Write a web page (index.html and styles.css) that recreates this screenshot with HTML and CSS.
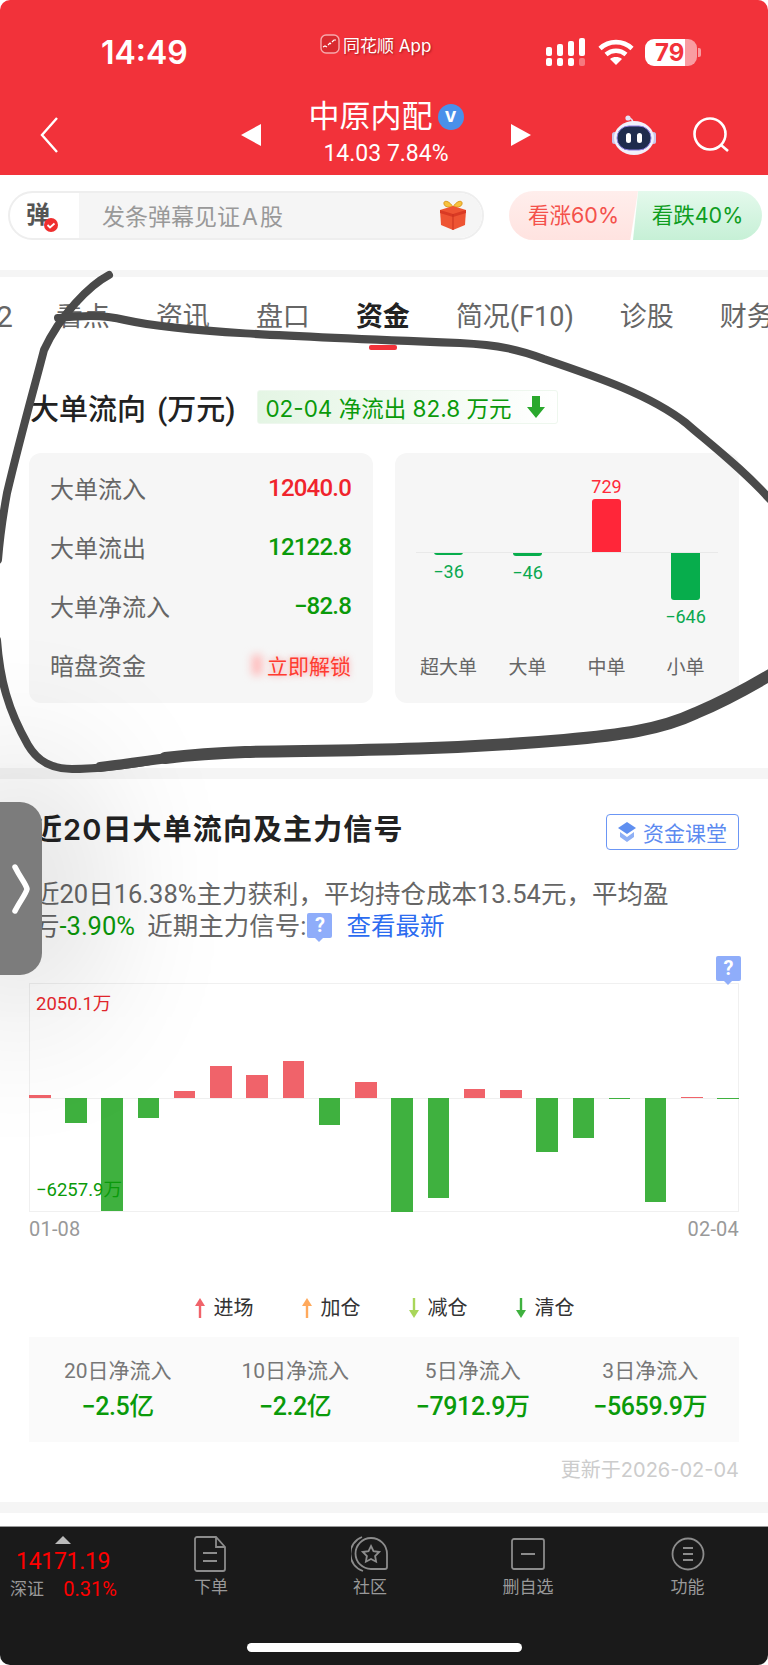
FILE: index.html
```html
<!DOCTYPE html>
<html lang="zh-CN">
<head>
<meta charset="utf-8">
<title>中原内配 资金</title>
<link rel="stylesheet" href="styles.css">
</head>
<body>
<div class="page">

  <header class="header">
    <div class="status">
      <div class="time">14:49</div>
      <div class="app">
        <svg class="app-logo" viewBox="0 0 20 20"><rect x="1" y="1" width="18" height="18" rx="5" fill="#d92a30" stroke="#f7a9ac" stroke-width="1.4"/><path d="M3 13l2-1 2 1M8 11l2-2 1 1M12 8l2-2 2 0" fill="none" stroke="#fff" stroke-width="1.2"/></svg>
        <span>同花顺 App</span>
      </div>
      <div class="status-icons">
        <svg class="signal" width="40" height="28" viewBox="0 0 40 28" fill="#fff">
          <rect x="0" y="9" width="6" height="9" rx="2"/><rect x="11" y="6" width="6" height="12" rx="2"/><rect x="22" y="3" width="6" height="15" rx="2"/><rect x="33" y="0" width="6" height="18" rx="2"/>
          <rect x="0" y="20" width="6" height="8" rx="2"/><rect x="11" y="20" width="6" height="8" rx="2"/><rect x="22" y="20" width="6" height="8" rx="2"/><rect x="33" y="20" width="6" height="8" rx="2" opacity=".35"/>
        </svg>
        <svg class="wifi" width="36" height="26" viewBox="0 0 36 26" fill="none" stroke="#fff" stroke-width="4.6">
          <path d="M2 9.5C11 1 25 1 34 9.5"/><path d="M8 15.5c6-5 14-5 20 0"/><path d="M18 26l-6-6c3.400-2.600 8.600-2.600 12 0z" fill="#fff" stroke="none"/>
        </svg>
        <div class="battery">79</div>
        <div class="battery-nub"></div>
      </div>
    </div>
    <div class="nav">
      <svg class="back" width="18" height="36" viewBox="0 0 18 36" fill="none" stroke="#fff" stroke-width="2.4"><path d="M17 1L2 18l15 17"/></svg>
      <div class="tri tri-left"></div>
      <div class="stock">
        <div class="stock-name">中原内配<span class="v-badge">v</span></div>
        <div class="stock-price">14.03 7.84%</div>
      </div>
      <div class="tri tri-right"></div>
      <svg class="robot" width="44" height="40" viewBox="0 0 44 40">
        <circle cx="16" cy="3" r="2.600" fill="#e4e4f6"/>
        <path d="M16 3c3 0 5 2 5 6" fill="none" stroke="#e4e4f6" stroke-width="1.600"/>
        <rect x="0" y="17" width="5" height="12" rx="2.500" fill="#c9c6ea"/>
        <rect x="39" y="17" width="5" height="12" rx="2.500" fill="#c9c6ea"/>
        <ellipse cx="22" cy="23" rx="20" ry="17" fill="#f1f1fb"/>
        <rect x="5" y="11" width="34" height="24" rx="12" fill="#1f2c4d" stroke="#8d7fe0" stroke-width="1"/>
        <rect x="14" y="18" width="5" height="10" rx="2.500" fill="#fff"/>
        <rect x="25" y="18" width="5" height="10" rx="2.500" fill="#fff"/>
      </svg>
      <svg class="search" width="36" height="36" viewBox="0 0 36 36" fill="none" stroke="#fff" stroke-width="2.600"><circle cx="17" cy="17" r="15.500"/><path d="M28 28l7 6"/></svg>
    </div>
  </header>

  <div class="barrage">
    <div class="barrage-input">
      <div class="barrage-tag">
        <span class="barrage-char">弹</span>
        <svg class="barrage-check" width="14" height="14" viewBox="0 0 14 14"><circle cx="7" cy="7" r="7" fill="#ef2f2f"/><path d="M3.500 7l2.500 2.500 4.500-4" fill="none" stroke="#fff" stroke-width="1.800"/></svg>
      </div>
      <div class="barrage-text">
        <span>发条弹幕见证<span class="barrage-a">A</span>股</span>
        <svg width="32" height="31" viewBox="0 0 32 31">
          <path d="M16 8C12 1 6 1 7 5c.5 3 5 3.500 9 3zM16 8c4-7 10-7 9-3-.5 3-5 3.500-9 3z" fill="#f7c23c" stroke="#dd9a1f"/>
          <path d="M3 11l13-4 13 4-1 15-12 5-12-5z" fill="#ee5433"/>
          <path d="M3 11l13 4 13-4v3l-13 4-13-4z" fill="#d93a24"/>
          <path d="M16 15v16" stroke="#c9301e" stroke-width="1"/>
        </svg>
      </div>
    </div>
    <div class="vote vote-up">看涨60%</div>
    <div class="vote vote-down">看跌40%</div>
  </div>

  <div class="divider divider-thin"></div>

  <nav class="tabs">
    <span class="tab tab-cut">2</span>
    <span class="tab">看点</span>
    <span class="tab">资讯</span>
    <span class="tab">盘口</span>
    <span class="tab tab-active">资金</span>
    <span class="tab">简况(F10)</span>
    <span class="tab">诊股</span>
    <span class="tab">财务</span>
  </nav>

  <section class="flow">
    <div class="flow-head">
      <h2 class="flow-title">大单流向 (万元)</h2>
      <div class="chip">
        <span>02-04 净流出 82.8 万元</span>
        <svg width="20" height="24" viewBox="0 0 20 24"><path d="M6 1h8v11h5L10 23 1 12h5z" fill="#29a82c"/></svg>
      </div>
    </div>
    <div class="flow-cards">
      <div class="card list-card">
        <div class="row"><span>大单流入</span><b class="red">12040.0</b></div>
        <div class="row"><span>大单流出</span><b class="green">12122.8</b></div>
        <div class="row"><span>大单净流入</span><b class="green">−82.8</b></div>
        <div class="row"><span>暗盘资金</span><em class="unlock">立即解锁</em></div>
      </div>
      <div class="card size-card">
        <div class="size-line"></div>
        <div class="size-col">
          <div class="size-up"></div>
          <div class="size-down"><div class="size-bar bar-green" style="height:3px"></div><span class="size-val green2">−36</span></div>
          <div class="size-name">超大单</div>
        </div>
        <div class="size-col">
          <div class="size-up"></div>
          <div class="size-down"><div class="size-bar bar-green" style="height:4px"></div><span class="size-val green2">−46</span></div>
          <div class="size-name">大单</div>
        </div>
        <div class="size-col">
          <div class="size-up"><span class="size-val red2">729</span><div class="size-bar bar-red" style="height:53px"></div></div>
          <div class="size-down"></div>
          <div class="size-name">中单</div>
        </div>
        <div class="size-col">
          <div class="size-up"></div>
          <div class="size-down"><div class="size-bar bar-green" style="height:48px"></div><span class="size-val green2">−646</span></div>
          <div class="size-name">小单</div>
        </div>
      </div>
    </div>
  </section>

  <div class="divider"></div>

  <section class="signal-sec">
    <div class="signal-head">
      <h2 class="signal-title">近20日大单流向及主力信号</h2>
      <div class="class-btn">
        <svg width="20" height="22" viewBox="0 0 20 22"><path d="M10 1l9 6-9 6-9-6z" fill="#5f8ff0"/><path d="M3 11l7 5 7-5v5l-7 5-7-5z" fill="#8fb0f5"/></svg>
        <span>资金课堂</span>
      </div>
    </div>
    <p class="signal-text">近20日16.38%主力获利，平均持仓成本13.54元，平均盈<br>亏<span class="green signal-pct">-3.90%</span> 近期主力信号:<span class="qmark">?</span><a class="more">查看最新</a></p>

    <div class="chart">
      <span class="qmark qmark-chart">?</span>
      <div class="chart-zero"></div>
      <span class="chart-max">2050.1万</span>
      <span class="chart-min">−6257.9万</span>
      <div class="bars">
        <div class="bar-col"><div class="bar-up"><i style="height:3px"></i></div><div class="bar-down"></div></div>
        <div class="bar-col"><div class="bar-up"></div><div class="bar-down"><i style="height:25px"></i></div></div>
        <div class="bar-col"><div class="bar-up"></div><div class="bar-down"><i style="height:113px"></i></div></div>
        <div class="bar-col"><div class="bar-up"></div><div class="bar-down"><i style="height:20px"></i></div></div>
        <div class="bar-col"><div class="bar-up"><i style="height:7px"></i></div><div class="bar-down"></div></div>
        <div class="bar-col"><div class="bar-up"><i style="height:32px"></i></div><div class="bar-down"></div></div>
        <div class="bar-col"><div class="bar-up"><i style="height:23px"></i></div><div class="bar-down"></div></div>
        <div class="bar-col"><div class="bar-up"><i style="height:37px"></i></div><div class="bar-down"></div></div>
        <div class="bar-col"><div class="bar-up"></div><div class="bar-down"><i style="height:27px"></i></div></div>
        <div class="bar-col"><div class="bar-up"><i style="height:16px"></i></div><div class="bar-down"></div></div>
        <div class="bar-col"><div class="bar-up"></div><div class="bar-down"><i style="height:114px"></i></div></div>
        <div class="bar-col"><div class="bar-up"></div><div class="bar-down"><i style="height:100px"></i></div></div>
        <div class="bar-col"><div class="bar-up"><i style="height:9px"></i></div><div class="bar-down"></div></div>
        <div class="bar-col"><div class="bar-up"><i style="height:8px"></i></div><div class="bar-down"></div></div>
        <div class="bar-col"><div class="bar-up"></div><div class="bar-down"><i style="height:54px"></i></div></div>
        <div class="bar-col"><div class="bar-up"></div><div class="bar-down"><i style="height:40px"></i></div></div>
        <div class="bar-col"><div class="bar-up"></div><div class="bar-down"><i style="height:1px"></i></div></div>
        <div class="bar-col"><div class="bar-up"></div><div class="bar-down"><i style="height:104px"></i></div></div>
        <div class="bar-col"><div class="bar-up"><i style="height:1px"></i></div><div class="bar-down"></div></div>
        <div class="bar-col"><div class="bar-up"></div><div class="bar-down"><i style="height:1px"></i></div></div>
      </div>
    </div>
    <div class="dates"><span>01-08</span><span>02-04</span></div>

    <div class="legend">
      <div class="legend-item"><svg class="arrow a-red" viewBox="0 0 12 20"><path d="M6 0l5 8H7.200v12H4.800V8H1z"/></svg>进场</div>
      <div class="legend-item"><svg class="arrow a-orange" viewBox="0 0 12 20"><path d="M6 0l5 8H7.200v12H4.800V8H1z"/></svg>加仓</div>
      <div class="legend-item"><svg class="arrow a-lime" viewBox="0 0 12 20"><path d="M6 20l5-8H7.200V0H4.800v12H1z"/></svg>减仓</div>
      <div class="legend-item"><svg class="arrow a-green" viewBox="0 0 12 20"><path d="M6 20l5-8H7.200V0H4.800v12H1z"/></svg>清仓</div>
    </div>

    <div class="stats">
      <div class="stat"><div class="stat-name">20日净流入</div><div class="stat-val">−2.5亿</div></div>
      <div class="stat"><div class="stat-name">10日净流入</div><div class="stat-val">−2.2亿</div></div>
      <div class="stat"><div class="stat-name">5日净流入</div><div class="stat-val">−7912.9万</div></div>
      <div class="stat"><div class="stat-name">3日净流入</div><div class="stat-val">−5659.9万</div></div>
    </div>
    <div class="updated">更新于2026-02-04</div>
  </section>

  <div class="divider"></div>
  <div class="gap"></div>

  <footer class="bottom">
    <div class="bottom-row">
      <div class="index">
        <div class="index-tri"></div>
        <div class="index-val">14171.19</div>
        <div class="index-sub"><span>深证</span><b>0.31%</b></div>
      </div>
      <div class="action">
        <svg width="34" height="36" viewBox="0 0 34 36" fill="none" stroke="#8c8c8c" stroke-width="1.800"><path d="M3 1h19l9 10v22a2 2 0 0 1-2 2H3a2 2 0 0 1-2-2V3a2 2 0 0 1 2-2zM22 1v10h9M9 17h14M9 25h14"/></svg>
        <span>下单</span>
      </div>
      <div class="action">
        <svg width="38" height="36" viewBox="0 0 38 36" fill="none" stroke="#8c8c8c" stroke-width="1.800"><path d="M20 2A16 16 0 0 1 36 18v13a2 2 0 0 1-2 2H20A15.500 15.500 0 0 1 20 2z"/><path d="M11 1A18 18 0 0 0 12 35"/><path d="M20 10l2.500 5.200 5.700.8-4.100 4 1 5.700-5.100-2.700-5.100 2.700 1-5.700-4.100-4 5.700-.8z"/></svg>
        <span>社区</span>
      </div>
      <div class="action">
        <svg width="36" height="34" viewBox="0 0 36 34" fill="none" stroke="#8c8c8c" stroke-width="1.800"><rect x="2" y="2" width="32" height="30" rx="2"/><path d="M11 17h14"/></svg>
        <span>删自选</span>
      </div>
      <div class="action">
        <svg width="34" height="34" viewBox="0 0 34 34" fill="none" stroke="#8c8c8c" stroke-width="1.800"><circle cx="17" cy="17" r="15.500"/><path d="M12 11h10M12 17h10M12 23h10"/></svg>
        <span>功能</span>
      </div>
    </div>
    <div class="home"></div>
  </footer>

  <!-- side handle -->
  <div class="handle">
    <svg width="18" height="50" viewBox="0 0 18 50" fill="none" stroke="#fff" stroke-width="5.500" stroke-linecap="round"><path d="M3 3c6 12 11 17 12 22-1 5-7 12-12 22"/></svg>
  </div>

  <!-- pen marks drawn over the screenshot -->
  <svg class="pen" width="768" height="1665" viewBox="0 0 768 1665" fill="none" stroke="#4a4a4a" stroke-linecap="round">
    <path stroke-width="8" d="M109 275C90 285 60 315 44 350 35 385 22 430 7 493 3 515 0 535-2 560"/>
    <path stroke-width="8" d="M-3 640C0 680 8 710 28 745 38 762 52 769 72 769 96 769 120 766 150 761"/>
    <path stroke-width="10" d="M100 767C125 764 150 760 185 756"/>
    <path stroke-width="12" d="M165 758C190 755 215 753 245 752 320 750 420 752 564 740 620 735 660 730 696 713 720 703 745 690 775 672"/>
    <path stroke-width="8" d="M58 318C80 316 100 314 125 320 180 332 280 336 460 343 500 345 520 350 544 359 600 378 650 395 686 423 705 440 745 470 775 505"/>
  </svg>
</div>
</body>
</html>
```

FILE: styles.css
```css
* { box-sizing: border-box; }
html, body { margin: 0; padding: 0; background: #fff; }
body {
  font-family: Roboto, "Noto Sans CJK SC", sans-serif;
  color: #666;
}
.page {
  position: relative;
  width: 768px;
  height: 1665px;
  overflow: hidden;
  background: #fff;
  border-radius: 10px;
}
h2, p { margin: 0; }

/* header */
.header { height: 175px; background: #f2323a; color: #fff; }
.status {
  display: grid;
  grid-template-columns: 320px 226px 1fr;
  align-items: center;
  height: 100px;
  padding-top: 4px;
}
.time {
  padding-left: 101px;
  font-family: Inter, sans-serif;
  font-size: 32px;
  font-weight: 600;
}
.app {
  display: flex;
  align-items: center;
  gap: 3px;
  margin-top: -16px;
  font-family: Inter, "Noto Sans CJK SC", sans-serif;
  font-size: 17px;
  text-shadow: 1px 1px 2px rgba(90, 0, 0, .5);
}
.app-logo { width: 20px; height: 20px; }
.status-icons { display: flex; align-items: center; }
.wifi { margin-left: 12px; }
.battery {
  width: 52px;
  height: 27px;
  margin-left: 11px;
  border-radius: 9px;
  background: linear-gradient(90deg, #fff 77%, #f99ca1 77%);
  color: #f2323a;
  font-family: Inter, sans-serif;
  font-size: 24px;
  font-weight: 700;
  line-height: 27px;
  padding-left: 10px;
}
.battery-nub { width: 3px; height: 9px; margin-left: 1px; border-radius: 0 2px 2px 0; background: #f99ca1; }
.nav { display: flex; align-items: center; height: 70px; padding-left: 40px; }
.tri { width: 0; height: 0; border-top: 11px solid transparent; border-bottom: 11px solid transparent; }
.tri-left { margin-left: 183px; border-right: 20px solid #fff; }
.tri-right { border-left: 20px solid #fff; }
.stock { width: 250px; margin-top: -5px; text-align: center; }
.stock-name { display: flex; justify-content: center; align-items: center; font-size: 31px; line-height: 36px; }
.v-badge {
  width: 26px;
  height: 26px;
  margin-left: 5px;
  border-radius: 50%;
  background: #4a90ea;
  font-family: "Liberation Sans", sans-serif;
  font-size: 20px;
  font-weight: 700;
  line-height: 23px;
}
.stock-price { margin-top: 7px; font-size: 23px; line-height: 24px; }
.robot { margin-left: 81px; }
.search { margin-left: 37px; }

/* barrage */
.barrage { display: flex; height: 95px; padding: 16px 0 0 8px; }
.barrage-input {
  display: flex;
  width: 476px;
  height: 49px;
  border: 2px solid #eee;
  border-radius: 25px;
  overflow: hidden;
}
.barrage-tag { position: relative; width: 69px; padding-left: 16px; }
.barrage-char { font-size: 24px; font-weight: 700; line-height: 44px; color: #555; }
.barrage-check { position: absolute; left: 34px; top: 25px; }
.barrage-text {
  flex: 1;
  display: flex;
  justify-content: space-between;
  align-items: center;
  padding: 0 13px 2px 23px;
  background: #f5f5f5;
  color: #999;
  font-family: Inter, "Noto Sans CJK SC", sans-serif;
  font-size: 23px;
}
.barrage-a { margin: 0 2px; }
.vote {
  width: 129px;
  height: 49px;
  font-family: Inter, "Noto Sans CJK SC", sans-serif;
  font-size: 21.500px;
  line-height: 49px;
  text-align: center;
}
.vote-up {
  margin-left: 25px;
  border-radius: 25px 0 0 25px;
  background: linear-gradient(180deg, #ffeeec, #ffe3e0);
  color: #f4514b;
  clip-path: polygon(0 0, 100% 0, 94% 100%, 0 100%);
}
.vote-down {
  margin-left: -5px;
  border-radius: 0 25px 25px 0;
  background: linear-gradient(180deg, #e4f9ec, #c6f0d6);
  color: #0f9d1f;
  clip-path: polygon(4% 0, 100% 0, 100% 100%, 0 100%);
}

.divider { height: 11px; background: #f5f5f5; }
.divider-thin { height: 7px; }
.gap { height: 13px; }

/* tabs */
.tabs { display: flex; gap: 46px; height: 73px; padding: 20px 0 0 57px; white-space: nowrap; font-size: 27px; line-height: 40px; }
.tab { position: relative; }
.tab-cut { margin-left: -61px; margin-right: -3px; font-size: 30px; }
.tab-active { color: #222; font-weight: 700; }
.tab-active::after {
  content: "";
  position: absolute;
  left: 13px;
  bottom: 0;
  width: 28px;
  height: 5px;
  border-radius: 2px;
  background: #f2323a;
}

/* flow section */
.flow { padding: 40px 29px 65px; }
.flow-head { display: flex; align-items: center; height: 34px; }
.flow-title { margin-left: 1px; font-size: 29px; font-weight: 500; word-spacing: 4px; color: #222; }
.chip {
  display: flex;
  align-items: center;
  gap: 15px;
  height: 34px;
  margin-left: 22px;
  padding: 0 11px 0 7px;
  border: 1px solid #eef7ee;
  border-radius: 3px;
  background: linear-gradient(90deg, #e4f5e4, #fff);
  color: #0a9a0a;
  font-family: Inter, "Noto Sans CJK SC", sans-serif;
  font-size: 22.500px;
}
.flow-cards { display: grid; grid-template-columns: 344px 344px; gap: 22px; margin-top: 29px; }
.card { height: 250px; border-radius: 12px; background: #f6f6f6; }
.list-card { padding: 5px 22px 5px 21px; }
.row { display: flex; justify-content: space-between; align-items: center; height: 59px; font-size: 24px; }
.row b { font-size: 24px; font-weight: 500; letter-spacing: -.8px; }
.red { color: #f0242c; }
.green { color: #0a9a0a; }
.unlock { position: relative; color: #ff3b30; font-size: 21px; font-style: normal; text-shadow: 0 0 6px rgba(255, 90, 90, .6); }
.unlock::before {
  content: "";
  position: absolute;
  left: -15px;
  top: 5px;
  width: 10px;
  height: 20px;
  background: #ffb9b9;
  filter: blur(4px);
}
.size-card { position: relative; display: grid; grid-template-columns: repeat(4, 79px); padding-left: 14px; }
.size-line { position: absolute; left: 21px; top: 99px; width: 302px; height: 1px; background: #e9e9e9; }
.size-col { display: flex; flex-direction: column; align-items: center; }
.size-up { display: flex; flex-direction: column; justify-content: flex-end; align-items: center; height: 99px; }
.size-down { display: flex; flex-direction: column; align-items: center; height: 104px; }
.size-bar { width: 29px; }
.bar-red { border-radius: 3px 3px 0 0; background: #ff2639; }
.bar-green { border-radius: 0 0 3px 3px; background: #07ad4c; }
.size-val { font-size: 18px; line-height: 24px; }
.size-down .size-val { margin-top: 5px; }
.red2 { color: #ff2a3a; }
.green2 { color: #0aa84f; }
.size-name { font-size: 19px; line-height: 24px; }

/* signal section */
.signal-sec { padding: 35px 29px 20px; }
.signal-head { display: flex; justify-content: space-between; align-items: flex-start; height: 36px; }
.signal-title {
  margin: 1px 0 0 4px;
  font-family: Inter, "Noto Sans CJK SC", sans-serif;
  font-size: 29px;
  font-weight: 600;
  letter-spacing: 1.100px;
  line-height: 30px;
  color: #222;
}
.class-btn {
  display: flex;
  align-items: center;
  gap: 6px;
  width: 133px;
  height: 36px;
  padding-left: 10px;
  border: 1.500px solid #6b96f5;
  border-radius: 4px;
  color: #5c8af0;
  font-size: 21px;
}
.signal-text {
  height: 64px;
  margin: 28px 0 0 5px;
  font-size: 25.500px;
  line-height: 32px;
  white-space: nowrap;
}
.signal-pct { margin-right: 6px; }
.qmark {
  display: inline-block;
  position: relative;
  width: 25px;
  height: 25px;
  margin: 0 14px 0 1px;
  border-radius: 2px;
  background: #8fadfa;
  color: #fff;
  font-size: 20px;
  font-weight: 700;
  line-height: 25px;
  text-align: center;
  vertical-align: 3px;
}
.qmark::after {
  content: "";
  position: absolute;
  left: 8px;
  bottom: -4px;
  border-left: 4px solid transparent;
  border-right: 4px solid transparent;
  border-top: 4px solid #8fadfa;
}
.more { color: #2c6cf0; font-size: 24.500px; }
.chart { position: relative; height: 229px; margin-top: 41px; border: 1px solid #f0f0f0; }
.qmark-chart { position: absolute; right: -3px; top: -28px; margin: 0; }
.chart-zero { position: absolute; left: 0; right: 0; top: 114px; height: 1px; background: #efefef; }
.chart-max, .chart-min { position: absolute; z-index: 1; font-size: 18.500px; line-height: 24px; }
.chart-max { left: 6px; top: 8px; color: #e0252b; }
.chart-min { left: 6px; top: 194px; color: #0a9a0a; }
.bars { position: relative; display: flex; justify-content: space-between; height: 100%; margin: 0 -1px; }
.bar-col { width: 21.500px; }
.bar-col i { display: block; }
.bar-up { display: flex; flex-direction: column; justify-content: flex-end; height: 114px; }
.bar-up i { background: #f0636a; }
.bar-down i { background: #3fb13f; }
.dates { display: flex; justify-content: space-between; margin-top: 5px; color: #999; font-size: 20px; letter-spacing: .2px; line-height: 24px; }
.legend { display: flex; justify-content: center; gap: 47px; margin-top: 52px; color: #333; font-size: 20px; line-height: 30px; }
.legend-item { display: flex; align-items: center; gap: 8px; width: 60px; }
.arrow { width: 12px; height: 20px; flex: none; }
.a-red { fill: #f0636a; }
.a-orange { fill: #ffa95c; }
.a-lime { fill: #a9d65a; }
.a-green { fill: #3fb13f; }
.stats { display: grid; grid-template-columns: repeat(4, 1fr); height: 105px; margin-top: 14px; padding-top: 20px; background: #fafafa; text-align: center; }
.stat-name { font-size: 21px; line-height: 28px; color: #777; }
.stat-val { margin-top: 6px; color: #0a9a0a; font-size: 25px; font-weight: 500; letter-spacing: -.4px; line-height: 32px; }
.updated { margin-top: 16px; color: #ccc; font-family: Inter, "Noto Sans CJK SC", sans-serif; font-size: 20px; line-height: 24px; text-align: right; }

/* bottom bar */
.bottom { height: 140px; padding-top: 9px; border-top: 1px solid #999; background: #1a1a1a; color: #999; }
.bottom-row { display: grid; grid-template-columns: 131px 160px 158px 158px 161px; height: 62px; }
.index { position: relative; padding-left: 10px; }
.index-tri { width: 0; height: 0; margin-left: 45px; border-left: 8px solid transparent; border-right: 8px solid transparent; border-bottom: 8px solid #bbb; }
.index-val { margin: 5px 0 0 6px; color: #f00; font-size: 23px; letter-spacing: -.3px; line-height: 26px; }
.index-sub { display: flex; justify-content: space-between; width: 107px; font-size: 17px; line-height: 24px; margin-top: 2px; }
.index-sub b { color: #f00; font-size: 20px; font-weight: 400; }
.action { display: flex; flex-direction: column; align-items: center; gap: 4px; font-size: 17px; line-height: 22px; }
.action svg { height: 36px; }
.home { width: 275px; height: 9px; margin: 45px auto 0; border-radius: 5px; background: #fff; }

/* overlays */
.handle {
  position: absolute;
  left: 0;
  top: 802px;
  display: flex;
  align-items: center;
  width: 42px;
  height: 173px;
  padding: 0 0 0 12px;
  border-radius: 0 22px 22px 0;
  background: #7c7c7c;
  box-shadow: 0 0 150px 40px rgba(0, 0, 0, .16);
}
.pen { position: absolute; left: 0; top: 0; pointer-events: none; }
```
